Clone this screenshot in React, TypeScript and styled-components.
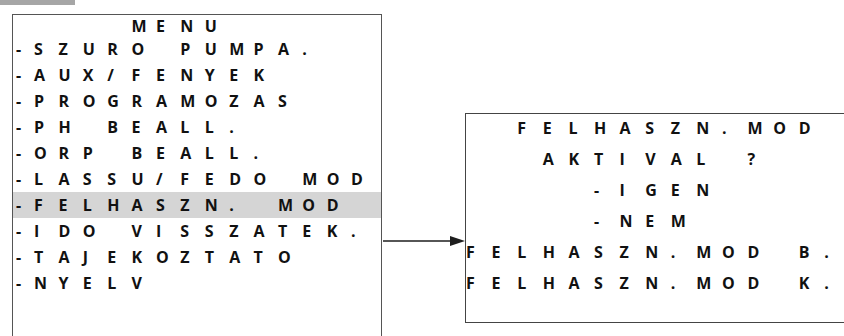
import React from "react";
import styled, { createGlobalStyle } from "styled-components";

const GlobalStyle = createGlobalStyle`
  html, body {
    margin: 0;
    padding: 0;
    background: #ffffff;
    overflow: hidden;
  }
  body {
    font-family: "Open Sans", Lato, "Liberation Sans", sans-serif;
  }
`;

const Page = styled.div`
  width: 844px;
  height: 336px;
  display: flex;
  flex-direction: column;
  overflow: hidden;
  background: #fff;
`;

const TopTab = styled.div`
  width: 75px;
  height: 5px;
  background: #a6a6a6;
  flex: none;
`;

const Diagram = styled.div`
  display: flex;
  align-items: flex-start;
  padding-top: 9px;
  padding-left: 12px;
`;

const MenuPanel = styled.div`
  box-sizing: border-box;
  width: 370px;
  height: 340px;
  flex: none;
  border: 1.5px solid #555;
  padding-top: 1px;
  display: flex;
  flex-direction: column;
`;

const ConfirmPanel = styled.div`
  box-sizing: border-box;
  width: 400px;
  height: 210px;
  flex: none;
  margin-top: 99px;
  border: 1px solid #444;
  display: flex;
  flex-direction: column;
`;

const ArrowWrap = styled.div`
  flex: none;
  width: 83px;
  height: 14px;
  margin-top: 220px;
  display: flex;
`;

const Line = styled.div<{ $cols: string; $h: number; $active?: boolean }>`
  display: grid;
  grid-template-columns: ${(p) => p.$cols};
  height: ${(p) => p.$h}px;
  line-height: ${(p) => p.$h}px;
  align-items: center;
  background: ${(p) => (p.$active ? "#d5d5d5" : "transparent")};
  font-size: 16px;
  font-weight: 700;
  color: #111;
`;

const Cell = styled.span`
  display: block;
  white-space: pre;
  text-align: left;
`;

const DashCell = styled(Cell)`
  padding-left: 3px;
`;

const LEFT_COLS = "21px repeat(14, 24.4px)";
const RIGHT_COLS = "repeat(15, 25.6px)";

type LcdProps = {
  text: string;
  cols: string;
  h: number;
  active?: boolean;
  leadDash?: boolean;
};

function LcdLine({ text, cols, h, active, leadDash }: LcdProps) {
  const chars = Array.from(text);
  return (
    <Line $cols={cols} $h={h} $active={active}>
      {chars.map((c, i) =>
        i === 0 && leadDash ? (
          <DashCell key={i}>{c}</DashCell>
        ) : (
          <Cell key={i}>{c === " " ? "\u00a0" : c}</Cell>
        )
      )}
    </Line>
  );
}

const menuItems = [
  "-SZURO PUMPA.",
  "-AUX/FENYEK",
  "-PROGRAMOZAS",
  "-PH BEALL.",
  "-ORP BEALL.",
  "-LASSU/FEDO MOD",
  "-FELHASZN. MOD",
  "-IDO VISSZATEK.",
  "-TAJEKOZTATO",
  "-NYELV",
];

const confirmLines = [
  "  FELHASZN.MOD",
  "   AKTIVAL ?",
  "     -IGEN",
  "     -NEM",
  "FELHASZN.MOD B.",
  "FELHASZN.MOD K.",
];

function Arrow() {
  return (
    <svg width="83" height="14" viewBox="0 0 83 14">
      <line x1="1" y1="7" x2="70" y2="7" stroke="#1e1e1e" strokeWidth="1.6" />
      <polygon points="68,2 83,7 68,12" fill="#1e1e1e" />
    </svg>
  );
}

export default function App() {
  return (
    <>
      <GlobalStyle />
      <Page>
        <TopTab />
        <Diagram>
          <MenuPanel>
            <LcdLine text={" ".repeat(5) + "MENU"} cols={LEFT_COLS} h={20} />
            {menuItems.map((t) => (
              <LcdLine
                key={t}
                text={t}
                cols={LEFT_COLS}
                h={26}
                leadDash
                active={t === "-FELHASZN. MOD"}
              />
            ))}
          </MenuPanel>
          <ArrowWrap>
            <Arrow />
          </ArrowWrap>
          <ConfirmPanel>
            {confirmLines.map((t, i) => (
              <LcdLine key={i} text={t} cols={RIGHT_COLS} h={i === 0 ? 29.5 : 31.2} />
            ))}
          </ConfirmPanel>
        </Diagram>
      </Page>
    </>
  );
}
